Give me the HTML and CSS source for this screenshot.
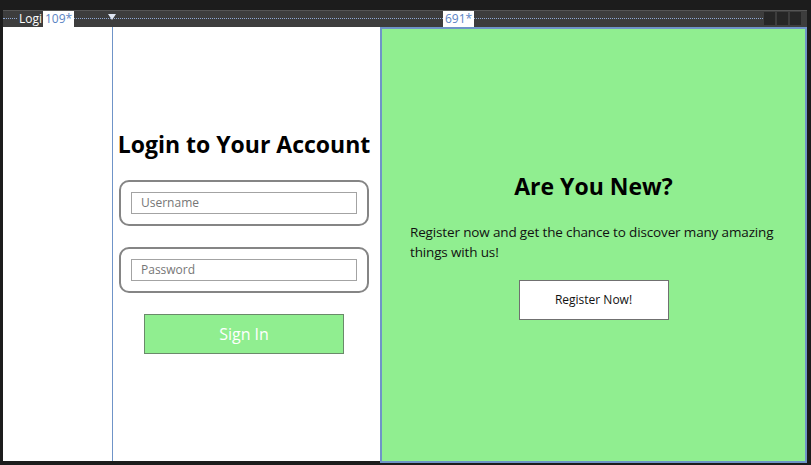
FILE: index.html
```html
<!DOCTYPE html>
<html>
<head>
<meta charset="utf-8">
<link rel="stylesheet" href="styles.css">
</head>
<body>
<div class="app">
  <div class="topgap"></div>
  <div class="ruler">
    <span class="ruler-title">Logi</span>
    <span class="ruler-tag tag-a">109*</span>
    <span class="ruler-marker"></span>
    <span class="ruler-tag tag-b">691*</span>
    <div class="ruler-btns"><span></span><span></span><span></span></div>
  </div>
  <div class="design">
    <div class="left">
      <div class="gridline"></div>
      <div class="login">
        <h1 class="title">Login to Your Account</h1>
        <div class="field"><div class="input">Username</div></div>
        <div class="field"><div class="input">Password</div></div>
        <div class="signin">Sign In</div>
      </div>
    </div>
    <div class="right">
      <h2 class="title">Are You New?</h2>
      <p class="desc">Register now and get the chance to discover many amazing things with us!</p>
      <div class="register">Register Now!</div>
    </div>
  </div>
</div>
</body>
</html>
```
FILE: styles.css
```css
* { box-sizing: border-box; }
html, body { margin: 0; padding: 0; }
body {
  background: #1c1c1c;
  width: 811px;
  height: 465px;
  overflow: hidden;
  font-family: "Open Sans", "Noto Sans", sans-serif;
}
.app { width: 811px; height: 465px; }
.topgap { height: 10px; background: #1c1c1c; }
.ruler {
  position: relative;
  height: 17px;
  margin-left: 3px;
  width: 804px;
  background: #3d3d3d;
  border-top: 1px solid #555;
}
.ruler::before {
  content: "";
  position: absolute;
  left: 0; right: 40px; top: 7px;
  border-top: 1px dotted #8fa9d4;
}
.ruler-title {
  position: absolute;
  left: 15px; top: 0px;
  color: #fff;
  font-size: 12px;
  line-height: 15px;
  background: #3d3d3d;
  padding: 0 1px;
}
.ruler-tag {
  position: absolute;
  top: 0px;
  height: 16px;
  background: #fff;
  color: #5b84c4;
  font-size: 12px;
  line-height: 15px;
  padding: 0 2px;
}
.tag-a { left: 40px; }
.tag-b { left: 440px; }
.ruler-marker {
  position: absolute;
  left: 105px; top: 3px;
  width: 0; height: 0;
  border-left: 4px solid transparent;
  border-right: 4px solid transparent;
  border-top: 6px solid #dfe6f2;
}
.ruler-btns {
  position: absolute;
  right: 6px; top: 1px;
  display: flex;
  gap: 2px;
}
.ruler-btns span {
  width: 11px; height: 13px;
  background: #262626;
}
.design {
  display: flex;
  height: 436px;
  padding-left: 3px;
}
.left {
  position: relative;
  width: 377px;
  height: 434px;
  background: #fff;
  display: flex;
  align-items: center;
  padding-left: 106px;
  padding-bottom: 6px;
}
.gridline {
  position: absolute;
  left: 109px; top: 0; bottom: 0;
  width: 1px;
  background: #6f94c8;
}
.login {
  width: 270px;
  display: flex;
  flex-direction: column;
  align-items: center;
}
.title {
  margin: 0;
  font-size: 23px;
  font-weight: 700;
  color: #000;
  line-height: 32px;
}
.login .title { margin-bottom: 20px; }
.field {
  width: 250px;
  height: 46px;
  border: 2px solid #858585;
  border-radius: 10px;
  padding: 10px;
  margin-bottom: 21px;
}
.input {
  height: 22px;
  border: 1px solid #a3a3a3;
  padding-left: 9px;
  font-size: 12px;
  line-height: 20px;
  color: #767676;
}
.signin {
  width: 200px;
  height: 40px;
  background: #90ee90;
  border: 1px solid #6a8a6a;
  color: #fff;
  font-size: 16px;
  line-height: 38px;
  text-align: center;
}
.right {
  width: 427px;
  height: 436px;
  background: #90ee90;
  border: 2px solid #6f94c8;
  display: flex;
  flex-direction: column;
  align-items: center;
  justify-content: center;
  padding: 0 28px 0;
}
.right .title { margin-bottom: 20px; }
.desc {
  margin: 0 -12px 18px 0;
  width: calc(100% + 12px);
  font-size: 13.5px;
  letter-spacing: -0.15px;
  line-height: 20px;
  color: #111;
}
.register {
  width: 150px;
  height: 40px;
  background: #fff;
  border: 1px solid #707070;
  font-size: 12px;
  line-height: 38px;
  text-align: center;
  color: #111;
}
```
